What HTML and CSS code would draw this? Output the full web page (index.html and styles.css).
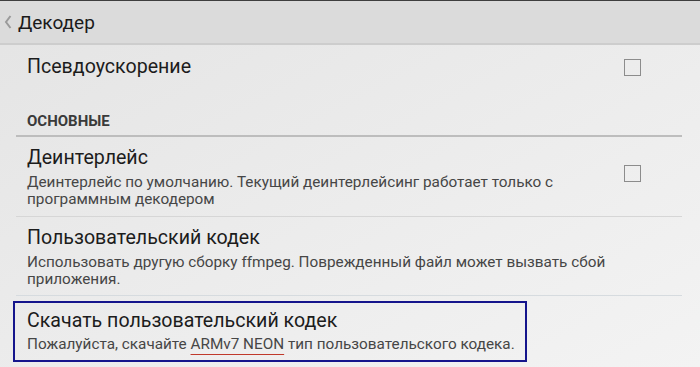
FILE: index.html
```html
<!DOCTYPE html>
<html lang="ru">
<head>
    <meta charset="UTF-8">
    <meta name="viewport" content="width=device-width, initial-scale=1.0">
    <title>Декодер</title>
    <link rel="stylesheet" href="styles.css">
</head>
<body>
    <div class="action-bar">
        <svg class="back" width="8" height="14" viewBox="0 0 8 14">
            <polyline points="6.5,1 2,7 6.5,13" fill="none" stroke="#9a9a9a" stroke-width="2"/>
        </svg>
        <span class="bar-title">Декодер</span>
    </div>

    <div class="prefs">
        <!-- Top item -->
        <div class="pref pref-first">
            <div class="pref-text">
                <div class="pref-title">Псевдоускорение</div>
            </div>
            <span class="check"></span>
        </div>

        <div class="category">ОСНОВНЫЕ</div>

        <div class="pref pref-line">
            <div class="pref-text">
                <div class="pref-title">Деинтерлейс</div>
                <div class="pref-summary">Деинтерлейс по умолчанию. Текущий деинтерлейсинг работает только с программным декодером</div>
            </div>
            <span class="check"></span>
        </div>

        <div class="pref pref-line pref-soft">
            <div class="pref-text">
                <div class="pref-title">Пользовательский кодек</div>
                <div class="pref-summary">Использовать другую сборку ffmpeg. Поврежденный файл может вызвать сбой приложения.</div>
            </div>
        </div>

        <!-- Highlighted download item -->
        <div class="pref pref-marked">
            <div class="pref-text">
                <div class="pref-title">Скачать пользовательский кодек</div>
                <div class="pref-summary">Пожалуйста, скачайте <span class="mark">ARMv7 NEON</span> тип пользовательского кодека.</div>
            </div>
        </div>
    </div>
</body>
</html>
```

FILE: styles.css
```css
/* Colors */
:root {
    --bar-bg: #dbdbdb;
    --title-color: #1c1c1c;
    --summary-color: #464646;
    --check-border: #8c8c8c;
    --mark-blue: #15158c;
}

body {
    margin: 0;
    height: 367px;
    overflow: hidden;
    font-family: Roboto, "Noto Sans", sans-serif;
    background: linear-gradient(to bottom right, #e4e4e4, #f3f3f3);
}

/* Action bar */
.action-bar {
    height: 42px;
    display: flex;
    align-items: center;
    background-color: var(--bar-bg);
    border-top: 1px solid #3e3e3e;
    border-bottom: 2px solid #cdcdcd;
    padding-left: 4px;
}
.back {
    margin-right: 6px;
}
.bar-title {
    font-size: 19px;
    color: #1a1a1a;
}

/* Preference list */
.prefs {
    margin: 0 18px 0 16px;
}
.pref {
    display: flex;
    align-items: center;
    padding-left: 11px;
}
.pref-text {
    flex: 1;
}
.pref-title {
    font-size: 19.6px;
    line-height: 24px;
    color: var(--title-color);
}
.pref-summary {
    font-size: 15.3px;
    line-height: 17px;
    color: var(--summary-color);
    margin-top: 4px;
    max-width: 595px;
}
.pref-first {
    padding-top: 10px;
    padding-bottom: 10px;
}
.category {
    font-size: 15px;
    font-weight: bold;
    line-height: 16px;
    color: #3a3a3a;
    padding: 24px 0 6px 11px;
    border-bottom: 2px solid #bdbdbd;
}
.pref-line {
    padding-top: 9px;
    padding-bottom: 8px;
    border-bottom: 1px solid #d6d6d6;
}
.pref-soft {
    padding-bottom: 7px;
    border-bottom-color: #d6dbdf;
}
.check {
    width: 15px;
    height: 15px;
    border: 1.5px solid var(--check-border);
    margin-right: 41px;
    flex-shrink: 0;
}
.pref-line .check {
    margin-top: -8px;
}

/* Highlighted item */
.pref-marked {
    width: 498px;
    margin: 5px 0 0 -3px;
    padding: 6px 0 7px 12px;
    border: 2px solid var(--mark-blue);
}
.pref-marked .pref-summary {
    margin-top: 3px;
}
.mark {
    text-decoration: underline;
    text-decoration-color: #c0392b;
    text-underline-offset: 5px;
}
```
